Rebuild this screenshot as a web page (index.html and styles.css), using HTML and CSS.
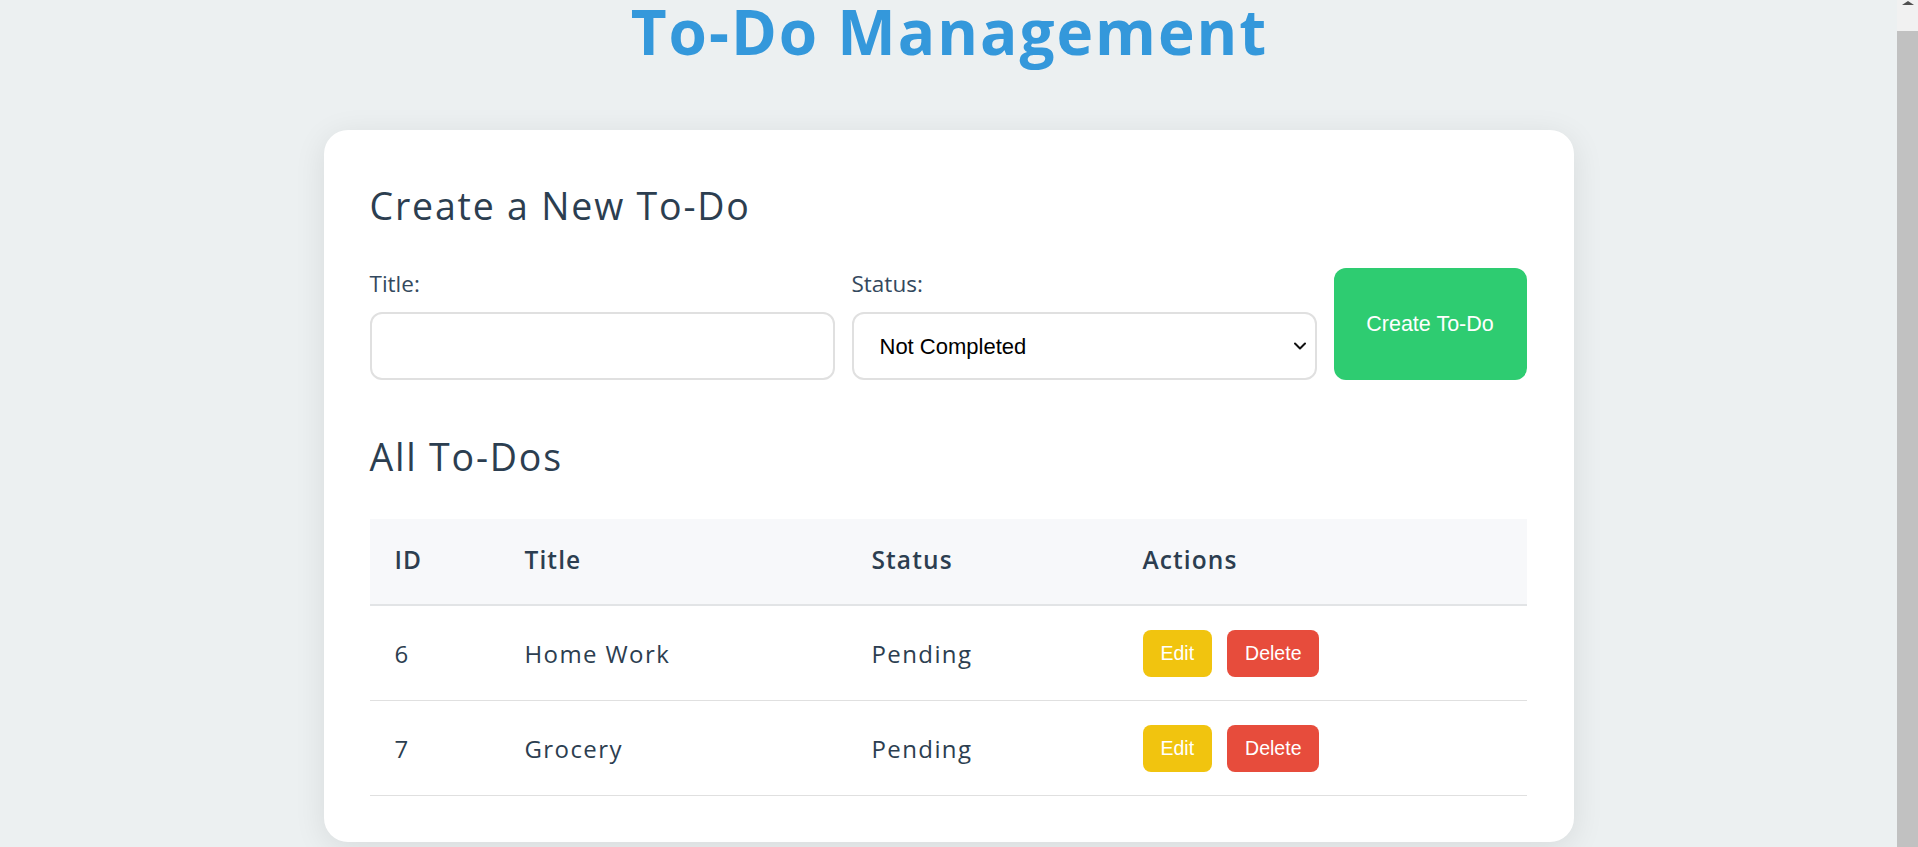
FILE: index.html
```html
<!DOCTYPE html>
<html lang="en">
<head>
<meta charset="utf-8">
<title>To-Do Management</title>
<link rel="stylesheet" href="styles.css">
</head>
<body>
<div class="page">
  <h1 class="app-title">To-Do Management</h1>
  <main class="card">
    <h2 class="section-title">Create a New To-Do</h2>
    <form class="todo-form">
      <div class="field">
        <label class="field-label" for="title">Title:</label>
        <input class="field-input" id="title" type="text">
      </div>
      <div class="field">
        <label class="field-label" for="status">Status:</label>
        <div class="select-wrap">
          <select class="field-input field-select" id="status">
            <option>Not Completed</option>
            <option>Completed</option>
          </select>
          <svg class="select-chevron" width="12" height="8" viewBox="0 0 12 8" aria-hidden="true">
            <polyline points="1,1.5 6,6.5 11,1.5" fill="none" stroke="#111" stroke-width="2" stroke-linecap="round" stroke-linejoin="round"/>
          </svg>
        </div>
      </div>
      <button class="btn-create" type="button">Create To-Do</button>
    </form>

    <h2 class="section-title section-title--list">All To-Dos</h2>
    <table class="todo-table">
      <thead>
        <tr>
          <th class="col-id">ID</th>
          <th class="col-title">Title</th>
          <th class="col-status">Status</th>
          <th class="col-actions">Actions</th>
        </tr>
      </thead>
      <tbody>
        <tr>
          <td>6</td>
          <td>Home Work</td>
          <td>Pending</td>
          <td><div class="actions"><button class="btn-sm btn-edit" type="button">Edit</button><button class="btn-sm btn-delete" type="button">Delete</button></div></td>
        </tr>
        <tr>
          <td>7</td>
          <td>Grocery</td>
          <td>Pending</td>
          <td><div class="actions"><button class="btn-sm btn-edit" type="button">Edit</button><button class="btn-sm btn-delete" type="button">Delete</button></div></td>
        </tr>
      </tbody>
    </table>
  </main>
</div>
<div class="scrollbar">
  <div class="scrollbar-arrow"></div>
  <div class="scrollbar-thumb"></div>
</div>
</body>
</html>
```
FILE: styles.css
```css
html, body {
  margin: 0;
  padding: 0;
  height: 100%;
  overflow: hidden;
}

body {
  background: #ecf0f1;
  font-family: "Open Sans", "Noto Sans", sans-serif;
  color: #2c3e50;
}

.page {
  width: calc(100% - 21px);
}

.app-title {
  margin: 0 0 68px;
  padding-left: 2px;
  text-align: center;
  font-size: 62px;
  line-height: 62px;
  font-weight: 700;
  letter-spacing: 2px;
  color: #3498db;
}

.card {
  width: 1250px;
  box-sizing: border-box;
  margin: 0 auto;
  background: #ffffff;
  border-radius: 24px;
  padding: 53px 47px 46px 46px;
  box-shadow: 0 6px 32px rgba(0, 0, 0, 0.09);
}

.section-title {
  margin: 0 0 40px;
  font-size: 37.5px;
  line-height: 45px;
  font-weight: 400;
  letter-spacing: 1.8px;
  color: #2c3e50;
}

.section-title--list {
  margin-top: 54px;
}

.todo-form {
  display: flex;
  gap: 17px;
  align-items: stretch;
}

.field {
  flex: 0 0 465px;
  display: flex;
  flex-direction: column;
}

.field-label {
  font-size: 22.5px;
  line-height: 32px;
  color: #34495e;
  margin-bottom: 12px;
}

.field-input {
  box-sizing: border-box;
  height: 68px;
  width: 100%;
  border: 2px solid #e0e0e0;
  border-radius: 12px;
  background: #fff;
  font-family: "Liberation Sans", Arial, sans-serif;
  font-size: 22px;
  padding: 0 22px;
  color: #000;
  outline: none;
}

.select-wrap {
  position: relative;
}

.field-select {
  -webkit-appearance: none;
  appearance: none;
  display: block;
  padding: 0 40px 0 26px;
}

.select-chevron {
  position: absolute;
  right: 11px;
  top: 30px;
  pointer-events: none;
}

.btn-create {
  flex: 1 1 auto;
  border: none;
  border-radius: 12px;
  background: #2ecc71;
  color: #fff;
  font-family: "Liberation Sans", Arial, sans-serif;
  font-size: 21.5px;
  cursor: pointer;
}

.todo-table {
  width: 100%;
  border-collapse: collapse;
  table-layout: fixed;
}

.todo-table thead tr {
  background: #f7f8fa;
}

.todo-table th {
  text-align: left;
  font-size: 24.5px;
  font-weight: 600;
  line-height: 36px;
  letter-spacing: 1.1px;
  padding: 23px 25px 26px;
  border-bottom: 2px solid #e2e4e6;
  color: #2c3e50;
}

.col-id { width: 80px; }
.col-title { width: 297px; }
.col-status { width: 221px; }

.todo-table td {
  font-size: 24px;
  line-height: 32px;
  letter-spacing: 1.4px;
  padding: 24px 25px 23px;
  border-bottom: 1px solid #e0e0e0;
  color: #2c3e50;
  vertical-align: middle;
}

.actions {
  display: flex;
  gap: 15px;
}

.btn-sm {
  height: 47px;
  border: none;
  border-radius: 8px;
  padding: 0 18px;
  color: #fff;
  font-family: "Liberation Sans", Arial, sans-serif;
  font-size: 19.5px;
  letter-spacing: 0;
  cursor: pointer;
}

.btn-edit { background: #f1c40f; }
.btn-delete { background: #e74c3c; }

.scrollbar {
  position: fixed;
  top: 0;
  right: 0;
  width: 21px;
  height: 100%;
  background: #f1f1f1;
}

.scrollbar-arrow {
  position: absolute;
  top: 1px;
  left: 5px;
  width: 0;
  height: 0;
  border-left: 6px solid transparent;
  border-right: 6px solid transparent;
  border-bottom: 4px solid #505050;
}

.scrollbar-thumb {
  position: absolute;
  top: 31px;
  bottom: 0;
  left: 0;
  right: 0;
  background: #c1c1c1;
}
```
